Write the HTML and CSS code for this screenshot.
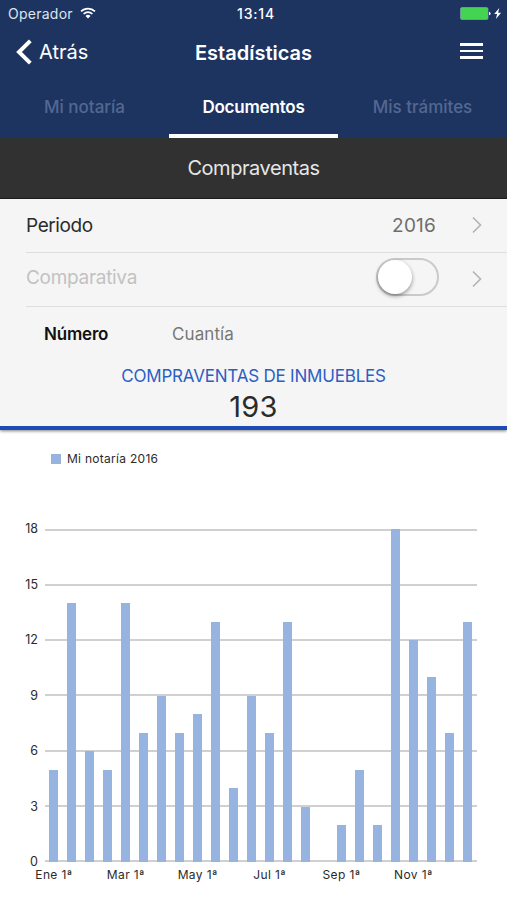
FILE: index.html
```
<!DOCTYPE html>
<html lang="es">

<head>
  <meta charset="utf-8">
  <title>Estadísticas</title>
  <link rel="stylesheet" href="styles.css">
</head>

<body>
  <header class="header">
    <div class="status">
      <div class="status-left">
        <span class="carrier">Operador</span>
        <svg class="wifi" width="16" height="12" viewBox="0 0 16 12" fill="none" stroke="#fff" stroke-width="1.7">
          <path d="M1 4.4a10 10 0 0 1 14 0" />
          <path d="M3.6 7a6.3 6.3 0 0 1 8.8 0" />
          <path d="M8 11.4L5.5 8.9a3.6 3.6 0 0 1 5 0z" fill="#fff" stroke="none" />
        </svg>
      </div>
      <span class="clock">13:14</span>
      <div class="status-right">
        <svg width="42" height="14" viewBox="0 0 42 14">
          <rect x="0.5" y="0.5" width="27.5" height="12" rx="1.5" fill="#43d551" stroke="#8b9bb8" stroke-width="0.7" />
          <path d="M29 4.7q1.6.4 1.6 1.8t-1.6 1.8z" fill="#fff" />
          <path d="M39.3 1.1L34.2 7.1h2.9l-1.2 5 5.2-6.4h-3z" fill="#fff" />
        </svg>
      </div>
    </div>
    <nav class="nav">
      <a class="back">
        <svg width="16" height="26" viewBox="0 0 16 26" fill="none" stroke="#fff" stroke-width="4">
          <path d="M14.3 1.8L3 13l11.3 11.2" />
        </svg>
        <span>Atrás</span>
      </a>
      <h1 class="title">Estadísticas</h1>
      <div class="menu"><i></i><i></i><i></i></div>
    </nav>
    <div class="tabs">
      <a class="tab">Mi notaría</a>
      <a class="tab active">Documentos</a>
      <a class="tab">Mis trámites</a>
    </div>
  </header>

  <h2 class="section">Compraventas</h2>

  <div class="panel">
    <div class="row">
      <span class="label">Periodo</span>
      <span class="value">2016</span>
      <svg class="chevron" width="10" height="18" viewBox="0 0 10 18"><path d="M1 1.5L8.5 9 1 16.5" /></svg>
    </div>
    <div class="row row-off">
      <span class="label">Comparativa</span>
      <span class="switch"><span class="knob"></span></span>
      <svg class="chevron" width="10" height="18" viewBox="0 0 10 18"><path d="M1 1.5L8.5 9 1 16.5" /></svg>
    </div>
    <div class="modes">
      <span class="mode selected">Número</span>
      <span class="mode">Cuantía</span>
    </div>
    <div class="total-label">COMPRAVENTAS DE INMUEBLES</div>
    <div class="total">193</div>
  </div>

  <div class="legend"><i class="swatch"></i><span>Mi notaría 2016</span></div>

  <div class="chart">
    <div class="scale">
      <span>18</span><span>15</span><span>12</span><span>9</span><span>6</span><span>3</span><span>0</span>
    </div>
    <div class="plot">
      <div class="lines"><i></i><i></i><i></i><i></i><i></i><i></i><i></i></div>
      <div class="bars" id="bars"></div>
    </div>
    <div class="months">
      <span>Ene 1ª</span><span>Mar 1ª</span><span>May 1ª</span><span>Jul 1ª</span><span>Sep 1ª</span><span>Nov 1ª</span>
    </div>
  </div>

  <script>
    var max = 18;
    var data = [5, 14, 6, 5, 14, 7, 9, 7, 8, 13, 4, 9, 7, 13, 3, 0, 2, 5, 2, 18, 12, 10, 7, 13];
    var bars = document.getElementById('bars');

    data.forEach(function (n) {
      var bar = document.createElement('div');
      bar.className = 'bar';
      bar.style.height = (n / max * 100) + '%';
      bars.appendChild(bar);
    });
  </script>
</body>

</html>
```

FILE: styles.css
```
* {
  box-sizing: border-box;
}

body {
  margin: 0;
  height: 900px;
  overflow: hidden;
  background: #fff;
  color: #2b2b2b;
  font-family: Inter, "Liberation Sans", sans-serif;
}

/* header */
.header {
  height: 138px;
  background: #1d3461;
  color: #fff;
}

.status {
  display: grid;
  grid-template-columns: 1fr auto 1fr;
  align-items: center;
  height: 27px;
  padding: 0 5px;
  font-size: 14px;
}

.status-left {
  display: flex;
  align-items: center;
  gap: 7px;
  padding-left: 3px;
}

.carrier {
  color: #dfe5f0;
  letter-spacing: 0.25px;
}

.wifi {
  margin-bottom: 2px;
}

.clock {
  padding-left: 5px;
  font-weight: 500;
  letter-spacing: 0.8px;
}

.status-right {
  display: flex;
  justify-content: flex-end;
}

.nav {
  display: grid;
  grid-template-columns: 1fr auto 1fr;
  align-items: center;
  height: 50px;
  padding: 0 16px;
}

.back {
  display: flex;
  align-items: center;
  gap: 7px;
  font-size: 20px;
}

.title {
  margin: 0;
  padding-top: 1px;
  font-size: 20px;
  font-weight: 600;
}

.menu {
  display: flex;
  flex-direction: column;
  gap: 4px;
  justify-self: end;
  width: 23px;
  margin: 0 8px 2px 0;
}

.menu i {
  height: 2.6px;
  background: #fff;
}

.tabs {
  display: grid;
  grid-template-columns: repeat(3, 1fr);
  height: 61px;
}

.tab {
  padding-top: 3px;
  border-bottom: 4px solid transparent;
  color: #536890;
  font-size: 17px;
  font-weight: 500;
  line-height: 54px;
  text-align: center;
}

.tab.active {
  border-color: #fff;
  color: #fff;
  font-weight: 600;
  letter-spacing: -0.2px;
}

.section {
  height: 61px;
  margin: 0;
  background: #313131;
  border-bottom: 1px solid #1f1f1f;
  color: #e6e6e6;
  font-size: 20px;
  font-weight: 400;
  letter-spacing: -0.45px;
  line-height: 61px;
  text-align: center;
}

/* filters */
.panel {
  height: 231px;
  background: #f5f5f5;
  border-bottom: 4px solid #1c4bb5;
  box-shadow: 0 1px 3px rgba(0, 0, 0, 0.5);
}

.row {
  display: flex;
  align-items: center;
  height: 54px;
  margin-left: 26px;
  padding-right: 25px;
  border-bottom: 1px solid #dedede;
  font-size: 19px;
}

.label {
  flex: 1;
  letter-spacing: -0.4px;
}

.row-off .label {
  padding-bottom: 4px;
  color: #c2c2c2;
  letter-spacing: -0.3px;
}

.value {
  margin-right: 36px;
  color: #6d6d6d;
  letter-spacing: 0.2px;
}

.chevron {
  margin-bottom: 1px;
  fill: none;
  stroke: #b5b5b5;
  stroke-width: 1.7;
}

.switch {
  width: 63px;
  height: 38px;
  margin: 0 33px 5px 0;
  border: 2px solid #cacaca;
  border-radius: 19px;
}

.knob {
  display: block;
  width: 34px;
  height: 34px;
  border-radius: 50%;
  background: #fff;
  box-shadow: 0 2px 4px rgba(0, 0, 0, 0.4);
}

.modes {
  display: flex;
  height: 54px;
  padding-left: 44px;
  font-size: 17px;
  line-height: 54px;
}

.mode {
  width: 128px;
  color: #777;
  letter-spacing: 0.1px;
}

.mode.selected {
  color: #111;
  font-weight: 600;
  letter-spacing: -0.2px;
}

.total-label {
  height: 29px;
  color: #2c5fc4;
  font-size: 17px;
  letter-spacing: -0.2px;
  line-height: 30px;
  text-align: center;
}

.total {
  font-size: 29px;
  letter-spacing: 0.3px;
  line-height: 33px;
  text-align: center;
}

/* chart */
.legend {
  display: flex;
  align-items: center;
  gap: 6px;
  height: 57px;
  padding-left: 51px;
  font-size: 12px;
  letter-spacing: 0.28px;
}

.swatch {
  width: 10px;
  height: 10px;
  background: #97b3e0;
}

.chart {
  display: grid;
  grid-template-columns: 45px 431.5px;
  grid-template-rows: 333px auto;
  margin-top: 42px;
}

.scale {
  display: flex;
  flex-direction: column;
  justify-content: space-between;
  margin: -8px 7px -8px 0;
  font-size: 12.5px;
  line-height: 16px;
  text-align: right;
}

.plot {
  display: grid;
}

.lines,
.bars {
  grid-area: 1 / 1;
  display: flex;
  justify-content: space-between;
}

.lines {
  flex-direction: column;
}

.lines i {
  height: 2px;
  background: #d0d0d0;
}

.bars {
  justify-content: space-around;
  align-items: flex-end;
}

.bar {
  width: 9px;
  background: #97b3e0;
}

.months {
  grid-column: 2;
  display: grid;
  grid-template-columns: repeat(6, 71.9px);
  margin-left: -27px;
  padding-top: 5px;
  font-size: 12px;
  letter-spacing: 0.4px;
  line-height: 16px;
  text-align: center;
}
```
